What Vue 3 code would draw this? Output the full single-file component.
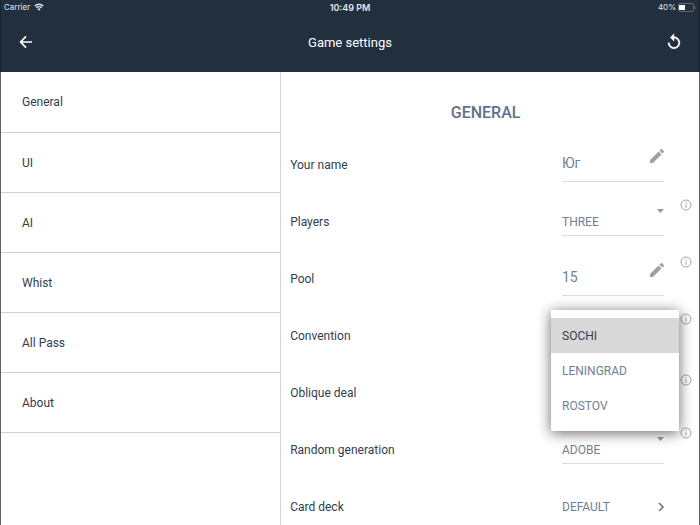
<script setup>
import { ref } from 'vue'

const sections = ['General', 'UI', 'AI', 'Whist', 'All Pass', 'About']
const settings = ref([
  { id: 'name', label: 'Your name', kind: 'text', value: 'Юг' },
  { id: 'players', label: 'Players', kind: 'select', value: 'THREE', info: true },
  { id: 'pool', label: 'Pool', kind: 'text', value: '15', info: true },
  { id: 'convention', label: 'Convention', kind: 'menu', value: 'SOCHI', options: ['SOCHI', 'LENINGRAD', 'ROSTOV'], info: true },
  { id: 'oblique', label: 'Oblique deal', kind: 'none', info: true, low: true },
  { id: 'random', label: 'Random generation', kind: 'select', value: 'ADOBE', info: true },
  { id: 'deck', label: 'Card deck', kind: 'link', value: 'DEFAULT' }
])
</script>

<template>
  <div class="app">
    <header class="top">
      <div class="status">
        <span class="carrier">Carrier
          <svg width="10" height="8" viewBox="0 0 20 16" aria-hidden="true">
            <path d="M1.500 6a12 12 0 0 1 17 0M4.700 9.500a7.500 7.500 0 0 1 10.600 0" fill="none" stroke="currentColor" stroke-width="2.900" />
            <path d="M10 15.500l-3.300-3.400a4.700 4.700 0 0 1 6.600 0z" fill="currentColor" />
          </svg>
        </span>
        <span class="time">10:49 PM</span>
        <span class="power">40%
          <svg width="18" height="9" viewBox="0 0 18 9" aria-hidden="true">
            <rect x="0.500" y="0.500" width="15" height="8" rx="1.500" fill="none" stroke="#5c6875" />
            <rect x="1" y="2" width="6" height="5" fill="#fff" />
            <path d="M17 3v3" stroke="#5c6875" />
          </svg>
        </span>
      </div>
      <div class="bar">
        <button class="icon" aria-label="Back">
          <svg width="18" height="18" viewBox="0 0 24 24" aria-hidden="true"><path d="M20 12H5M12 4.500L4.800 12l7.200 7.500" fill="none" stroke="currentColor" stroke-width="2.200" /></svg>
        </button>
        <h1>Game settings</h1>
        <button class="icon" aria-label="Reset">
          <svg width="18" height="18" viewBox="0 0 24 24" aria-hidden="true"><path d="M12 5V1L7 6l5 5V7c3.310 0 6 2.690 6 6s-2.690 6-6 6-6-2.690-6-6H4c0 4.420 3.580 8 8 8s8-3.580 8-8-3.580-8-8-8z" fill="currentColor" stroke="currentColor" stroke-width="0.500" /></svg>
        </button>
      </div>
    </header>
    <div class="body">
      <nav class="side">
        <a v-for="s in sections" :key="s" href="#">{{ s }}</a>
      </nav>
      <main class="panel">
        <h2>GENERAL</h2>
        <div v-for="s in settings" :key="s.id" class="row">
          <label v-if="s.kind === 'text' || s.kind === 'select'" class="name" :for="s.id">{{ s.label }}</label>
          <span v-else :id="s.id + '-label'" class="name">{{ s.label }}</span>

          <div v-if="s.kind === 'text'" class="field text">
            <input :id="s.id" v-model="s.value" type="text" />
            <svg width="14" height="14" viewBox="3 3 18 18" aria-hidden="true"><path d="M3 17.250V21h3.750L17.810 9.940l-3.750-3.750L3 17.250zM20.710 7.040a1 1 0 0 0 0-1.410l-2.340-2.340a1 1 0 0 0-1.410 0l-1.830 1.830 3.750 3.750 1.830-1.830z" fill="#a0a0a0" /></svg>
          </div>
          <div v-else-if="s.kind === 'select'" class="field choice">
            <select :id="s.id" v-model="s.value"><option>{{ s.value }}</option></select>
            <svg width="7" height="4" viewBox="0 0 7 4" aria-hidden="true"><path d="M0 0h7L3.500 4z" fill="#9c9c9c" /></svg>
          </div>
          <div v-else-if="s.kind === 'menu'" class="anchor">
            <div class="menu" role="listbox" :aria-labelledby="s.id + '-label'">
              <button v-for="o in s.options" :key="o" role="option" :aria-selected="o === s.value" :class="{ on: o === s.value }" @click="s.value = o">{{ o }}</button>
            </div>
          </div>
          <button v-else-if="s.kind === 'link'" class="link" :aria-describedby="s.id + '-label'">
            {{ s.value }}
            <svg width="6" height="10" viewBox="0 0 6 10" aria-hidden="true"><path d="M1 1l4 4-4 4" fill="none" stroke="#777" stroke-width="1.600" /></svg>
          </button>
          <span v-else></span>

          <button v-if="s.info" class="info" :class="{ low: s.low }" :aria-label="'About ' + s.label">
            <svg width="12" height="12" viewBox="0 0 12 12" aria-hidden="true">
              <circle cx="6" cy="6" r="5" fill="none" stroke="#a4a4a4" />
              <path d="M6 5.200v3.600M6 3v1.200" stroke="#a4a4a4" />
            </svg>
          </button>
        </div>
      </main>
    </div>
  </div>
</template>

<style>
body { margin: 0; overflow: hidden; }
</style>

<style scoped>
* { box-sizing: border-box; }
.app {
  display: flex;
  flex-direction: column;
  height: 100vh;
  overflow: hidden;
  font-family: Roboto, sans-serif;
  font-size: 12px;
  color: #303e4e;
  background: #fff;
}
button, input, select {
  font: inherit;
  color: inherit;
  background: none;
  border: 0;
  border-radius: 0;
  padding: 0;
  margin: 0;
  outline: 0;
}
.top { flex: none; background: #222f3e; color: #fff; border: 1px solid #18222d; border-width: 0 1px; }
.status {
  display: grid;
  grid-template-columns: 1fr auto 1fr;
  align-items: center;
  height: 14px;
  padding: 0 3px;
  font-family: Inter, sans-serif;
  font-size: 8px;
  color: #e4e7ea;
}
.carrier, .power { display: flex; align-items: center; gap: 4px; }
.power { justify-content: flex-end; gap: 2px; }
.time { font-weight: 600; font-size: 9px; }
.bar { display: flex; align-items: center; height: 58px; padding: 0 16px 2px; }
.icon { display: flex; width: 18px; height: 18px; }
h1 { flex: 1; margin: 0; text-align: center; font-size: 13px; font-weight: 400; }
.body { display: flex; flex: 1; min-height: 0; border: 1px solid #606060; border-width: 0 1px; }
.side { width: calc(40% + 1px); border-right: 1px solid #d5d5d5; }
.side a {
  display: flex;
  align-items: center;
  height: 60px;
  padding: 0 0 0 21px;
  border-bottom: 1px solid #d0d0d0;
  color: inherit;
  text-decoration: none;
}
.side a:first-child { height: 61px; }
.panel { flex: 1; overflow: hidden; }
h2 {
  margin: 0;
  padding: 30px 9px 13px 0;
  text-align: center;
  font-size: 16px;
  line-height: 22px;
  font-weight: 500;
  color: #5d7290;
}
.row {
  display: grid;
  grid-template-columns: 1fr 102px 35px;
  align-items: center;
  height: 57px;
  padding-left: 9px;
}
.name { padding-bottom: 2px; }
.field { display: flex; border-bottom: 1px solid #dcdcdc; color: #718093; }
.field svg { flex: none; }
.field input, .field select { flex: 1; min-width: 0; appearance: none; }
.text { height: 33px; font-size: 14px; }
.text input { padding-bottom: 5px; }
.choice { height: 27px; }
.anchor { position: relative; align-self: start; }
.menu {
  position: absolute;
  z-index: 1;
  top: 2px;
  left: -11px;
  width: 128px;
  padding: 8px 0;
  border-radius: 1px;
  background: #fff;
  box-shadow: 0 2px 14px rgba(0, 0, 0, 0.6);
}
.menu button {
  display: block;
  width: 100%;
  height: 35px;
  padding-left: 11px;
  text-align: left;
  color: #718093;
}
.menu .on { background: #d8d8d8; color: #303e4e; }
.link { display: flex; align-items: center; justify-content: space-between; padding-bottom: 2px; color: #718093; }
.info { display: flex; align-self: start; justify-content: flex-end; padding: 5px 7px 0 0; }
.low { padding-top: 9px; }
</style>
